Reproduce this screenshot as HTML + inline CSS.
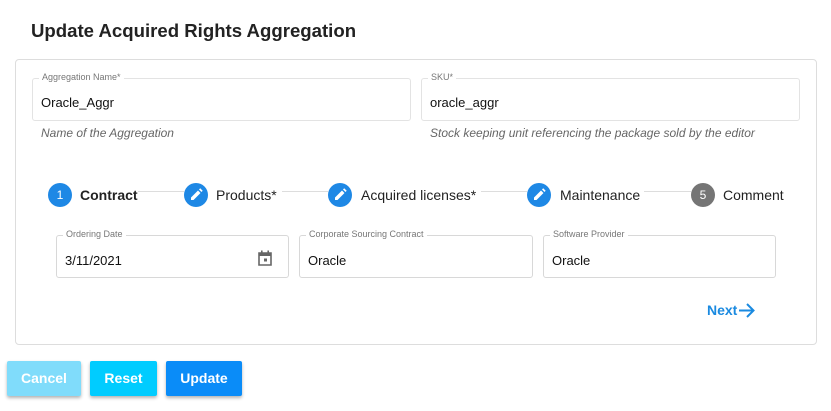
<!DOCTYPE html>
<html><head><style>
body{margin:0;width:831px;height:411px;background:#fff;font-family:"Liberation Sans",sans-serif;position:relative;overflow:hidden;color:#222}
.a{position:absolute}
.f{position:absolute;border:1px solid #e3e3e3;border-radius:3px}
.f .l{position:absolute;top:-7px;left:6px;background:#fff;padding:0 3px;font-size:9px;color:#777}
.f .v{position:absolute;left:8px;font-size:13px;color:#111}
.h{position:absolute;font-size:12px;font-style:italic;color:#666}
.c{position:absolute;width:24px;height:24px;border-radius:50%;background:#1e88e5;color:#fff;font-size:12px;text-align:center;line-height:24px}
.s{position:absolute;font-size:14px;top:187px;color:#222}
.ln{position:absolute;height:1px;background:#ddd;top:191px}
.b{position:absolute;top:361px;height:35px;line-height:35px;color:#fff;font-size:14px;font-weight:bold;text-align:center;box-shadow:0 2px 3px rgba(0,0,0,.3);border-radius:2px}
</style></head><body>
<div class="a" style="left:31px;top:20px;font-size:18.6px;font-weight:bold;color:#222">Update Acquired Rights Aggregation</div>
<div class="a" style="left:15px;top:59px;width:800px;height:284px;border:1px solid #ddd;border-radius:4px"></div>
<div class="f" style="left:32px;top:78px;width:377px;height:41px"><span class="l">Aggregation Name*</span><span class="v" style="top:16px">Oracle_Aggr</span></div>
<div class="h" style="left:41px;top:126px">Name of the Aggregation</div>
<div class="f" style="left:421px;top:78px;width:377px;height:41px"><span class="l">SKU*</span><span class="v" style="top:16px">oracle_aggr</span></div>
<div class="h" style="left:430px;top:126px">Stock keeping unit referencing the package sold by the editor</div>

<div class="ln" style="left:138px;width:46px"></div>
<div class="ln" style="left:282px;width:46px"></div>
<div class="ln" style="left:481px;width:46px"></div>
<div class="ln" style="left:644px;width:47px"></div>
<div class="c" style="left:48px;top:183px">1</div>
<div class="s" style="left:80px;font-weight:bold">Contract</div>
<div class="c" style="left:184px;top:183px"><svg width="24" height="24" viewBox="0 0 24 24"><path d="M7 17v-2.5l7-7 2.5 2.5-7 7zM15 6.5l1.2-1.2 2.5 2.5-1.2 1.2z" fill="#fff"/></svg></div>
<div class="s" style="left:216px">Products*</div>
<div class="c" style="left:328px;top:183px"><svg width="24" height="24" viewBox="0 0 24 24"><path d="M7 17v-2.5l7-7 2.5 2.5-7 7zM15 6.5l1.2-1.2 2.5 2.5-1.2 1.2z" fill="#fff"/></svg></div>
<div class="s" style="left:361px">Acquired licenses*</div>
<div class="c" style="left:527px;top:183px"><svg width="24" height="24" viewBox="0 0 24 24"><path d="M7 17v-2.5l7-7 2.5 2.5-7 7zM15 6.5l1.2-1.2 2.5 2.5-1.2 1.2z" fill="#fff"/></svg></div>
<div class="s" style="left:560px">Maintenance</div>
<div class="c" style="left:691px;top:183px;background:#757575">5</div>
<div class="s" style="left:723px">Comment</div>

<div class="f" style="left:56px;top:235px;width:231px;height:41px;border-color:#d8d8d8"><span class="l">Ordering Date</span><span class="v" style="top:17px">3/11/2021</span>
<svg class="a" style="left:201px;top:14px" width="14" height="16" viewBox="0 0 14 16"><path d="M1 3h12v12H1z" fill="none" stroke="#666" stroke-width="1.6"/><rect x="1" y="3" width="12" height="3" fill="#666"/><rect x="3" y="0.5" width="1.6" height="3" fill="#666"/><rect x="9.4" y="0.5" width="1.6" height="3" fill="#666"/><rect x="6" y="8.5" width="3" height="3" fill="#666"/></svg></div>
<div class="f" style="left:299px;top:235px;width:232px;height:41px;border-color:#d8d8d8"><span class="l">Corporate Sourcing Contract</span><span class="v" style="top:17px">Oracle</span></div>
<div class="f" style="left:543px;top:235px;width:231px;height:41px;border-color:#d8d8d8"><span class="l">Software Provider</span><span class="v" style="top:17px">Oracle</span></div>

<div class="a" style="left:707px;top:302px;font-size:14px;font-weight:bold;color:#1a8ae0">Next</div>
<svg class="a" style="left:738px;top:302px" width="18" height="17" viewBox="0 0 18 17"><path d="M1 8.5h15M9 2l6.5 6.5L9 15" fill="none" stroke="#1a8ae0" stroke-width="2"/></svg>

<div class="b" style="left:7px;width:74px;background:#80dcfb">Cancel</div>
<div class="b" style="left:90px;width:67px;background:#00ccff">Reset</div>
<div class="b" style="left:166px;width:76px;background:#0a8cf8">Update</div>
</body></html>
